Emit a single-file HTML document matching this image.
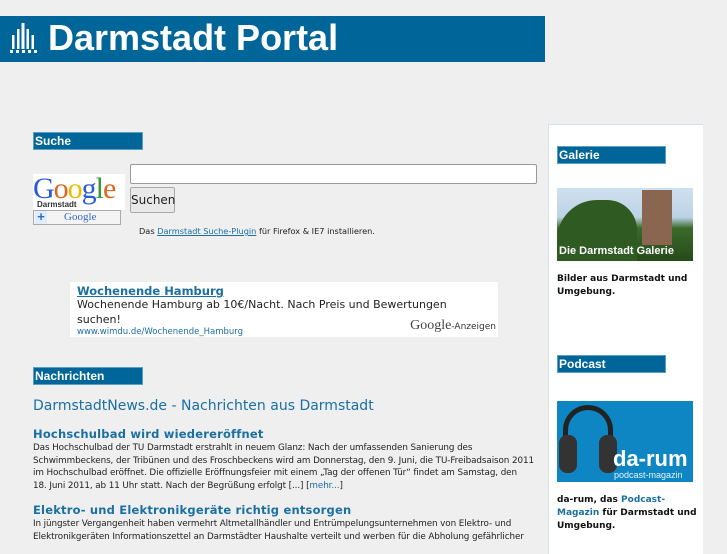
<!DOCTYPE html>
<html><head><meta charset="utf-8"><style>
*{margin:0;padding:0;box-sizing:border-box}
body{width:727px;height:545px;overflow:hidden;background:#efefef;font-family:"DejaVu Sans","Liberation Sans",sans-serif;position:relative}
.abs{position:absolute}
.hdr{left:0;top:16px;width:545px;height:46px;background:#00669a;color:#fff;font:bold 36px "Liberation Sans",sans-serif;padding:2px 0 0 48px;line-height:40px}
.h2{background:#00669a;color:#fff;font:bold 12px "Liberation Sans",sans-serif;height:18px;line-height:16px;padding-left:1px;border:1px solid #5d9ec3}
a{color:#1a6fa3}
.body{font-size:8.8px;color:#222;line-height:12.7px;letter-spacing:-0.1px;white-space:nowrap}
.side{left:548px;top:124px;width:155px;height:430px;background:#fff;border-left:1px solid #d5e2ea;border-top:1px solid #d5e2ea}
.st{font-size:9px;font-weight:bold;color:#111;line-height:13px}
</style></head><body>
<div class="abs hdr">Darmstadt Portal</div>
<svg class="abs" style="left:10px;top:21px" width="28" height="34" viewBox="0 0 28 34"><g fill="#fff"><rect x="2" y="14" width="2.5" height="14"/><rect x="7" y="8" width="2.5" height="20"/><rect x="11.5" y="2" width="3" height="26"/><rect x="16.5" y="8" width="2.5" height="20"/><rect x="21.5" y="14" width="2.5" height="14"/><rect x="0" y="29" width="3" height="3"/><rect x="6" y="29" width="3" height="3"/><rect x="12" y="29" width="3" height="3"/><rect x="18" y="29" width="3" height="3"/><rect x="24" y="29" width="3" height="3"/></g></svg>

<div class="abs h2" style="left:33px;top:132px;width:110px">Suche</div>
<div class="abs" style="left:33px;top:174px;width:92px;height:36px;background:#fff;font:30px 'Liberation Serif',serif;line-height:30px;letter-spacing:-1px"><span style="color:#2a5bd7">G</span><span style="color:#d62">o</span><span style="color:#eb0">o</span><span style="color:#2a5bd7">g</span><span style="color:#393">l</span><span style="color:#d62">e</span></div>
<div class="abs" style="left:37px;top:200px;font:bold 8px sans-serif;color:#333">Darmstadt</div>
<div class="abs" style="left:33px;top:210px;width:88px;height:15px;background:#f4f4f4;border:1px solid #aaa;font:11px 'Liberation Serif',serif;color:#36c;padding-left:30px"><span style="position:absolute;left:1px;top:0;width:12px;height:13px;background:#def;color:#36c;font:bold 13px sans-serif;line-height:12px;text-align:center">+</span>Google</div>
<div class="abs" style="left:130px;top:164px;width:407px;height:20px;background:#fff;border:1px solid #999;border-radius:2px"></div>
<div class="abs" style="left:130px;top:187px;width:45px;height:26px;background:#e9e9e9;border:1px solid #aaa;border-radius:2px;font-size:12px;line-height:24px;text-align:center;color:#222">Suchen</div>
<div class="abs" style="left:139px;top:226px;font-size:8.2px;color:#222">Das <a href="#">Darmstadt Suche-Plugin</a> für Firefox &amp; IE7 installieren.</div>

<div class="abs" style="left:70px;top:282px;width:428px;height:55px;background:#fff;overflow:hidden;padding:2px 0 0 7px">
<div style="font-size:11.5px;font-weight:bold;line-height:14px"><a href="#" style="color:#1a6fa3">Wochenende Hamburg</a></div>
<div style="font-size:11px;color:#222;line-height:14.5px">Wochenende Hamburg ab 10€/Nacht. Nach Preis und Bewertungen<br>suchen!</div>
<div style="font-size:8.5px;color:#1a6fa3">www.wimdu.de/Wochenende_Hamburg</div>
<div class="abs" style="right:2px;top:36px;font-size:9px;color:#333"><span style="font:14px 'Liberation Serif',serif;color:#444">Google</span>-Anzeigen</div>
</div>

<div class="abs h2" style="left:33px;top:367px;width:110px">Nachrichten</div>
<div class="abs" style="left:33px;top:398px;font-size:14px;color:#1a6fa3">DarmstadtNews.de - Nachrichten aus Darmstadt</div>
<div class="abs" style="left:33px;top:427px;font-size:11.5px;font-weight:bold;color:#1a6fa3;letter-spacing:0.2px">Hochschulbad wird wiedereröffnet</div>
<div class="abs body" style="left:33px;top:442px">Das Hochschulbad der TU Darmstadt erstrahlt in neuem Glanz: Nach der umfassenden Sanierung des<br>Schwimmbeckens, der Tribünen und des Froschbeckens wird am Donnerstag, den 9. Juni, die TU-Freibadsaison 2011<br>im Hochschulbad eröffnet. Die offizielle Eröffnungsfeier mit einem „Tag der offenen Tür“ findet am Samstag, den<br>18. Juni 2011, ab 11 Uhr statt. Nach der Begrüßung erfolgt [...] [<a href="#" style="text-decoration:none">mehr...</a>]</div>
<div class="abs" style="left:33px;top:503px;font-size:11.5px;font-weight:bold;color:#1a6fa3;letter-spacing:0.2px">Elektro- und Elektronikgeräte richtig entsorgen</div>
<div class="abs body" style="left:33px;top:518px">In jüngster Vergangenheit haben vermehrt Altmetallhändler und Entrümpelungsunternehmen von Elektro- und<br>Elektronikgeräten Informationszettel an Darmstädter Haushalte verteilt und werben für die Abholung gefährlicher</div>

<div class="abs side"></div>
<div class="abs h2" style="left:557px;top:146px;width:109px">Galerie</div>
<div class="abs" style="left:557px;top:188px;width:136px;height:73px;background:linear-gradient(#cfe0ef,#bcd3e6 40%,#3a6a2a 55%,#284a1c);overflow:hidden">
<div class="abs" style="left:0;top:12px;width:80px;height:61px;background:#2f5a22;border-radius:40px 30px 0 0"></div>
<div class="abs" style="left:85px;top:2px;width:30px;height:55px;background:#8a6550"></div>
<div class="abs" style="left:2px;top:57px;color:#fff;font:bold 11px 'Liberation Sans',sans-serif">Die Darmstadt Galerie</div></div>
<div class="abs st" style="left:557px;top:273px;width:140px">Bilder aus Darmstadt und Umgebung.</div>
<div class="abs h2" style="left:557px;top:355px;width:109px">Podcast</div>
<div class="abs" style="left:557px;top:401px;width:136px;height:81px;background:#0e86c4;overflow:hidden">
<div class="abs" style="left:6px;top:4px;width:50px;height:60px;border:5px solid #222;border-bottom:none;border-radius:25px 25px 0 0"></div>
<div class="abs" style="left:2px;top:34px;width:18px;height:38px;background:#333;border-radius:8px"></div>
<div class="abs" style="left:42px;top:34px;width:18px;height:38px;background:#333;border-radius:8px"></div>
<div class="abs" style="left:56px;top:47px;color:#fff;font:bold 22px 'Liberation Sans',sans-serif;line-height:22px">da-rum</div>
<div class="abs" style="left:57px;top:69px;color:#e8f4ff;font:9px 'Liberation Sans',sans-serif">podcast-magazin</div></div>
<div class="abs st" style="left:557px;top:494px;width:140px">da-rum, das <span style="color:#1a6fa3">Podcast-Magazin</span> für Darmstadt und Umgebung.</div>
</body></html>
